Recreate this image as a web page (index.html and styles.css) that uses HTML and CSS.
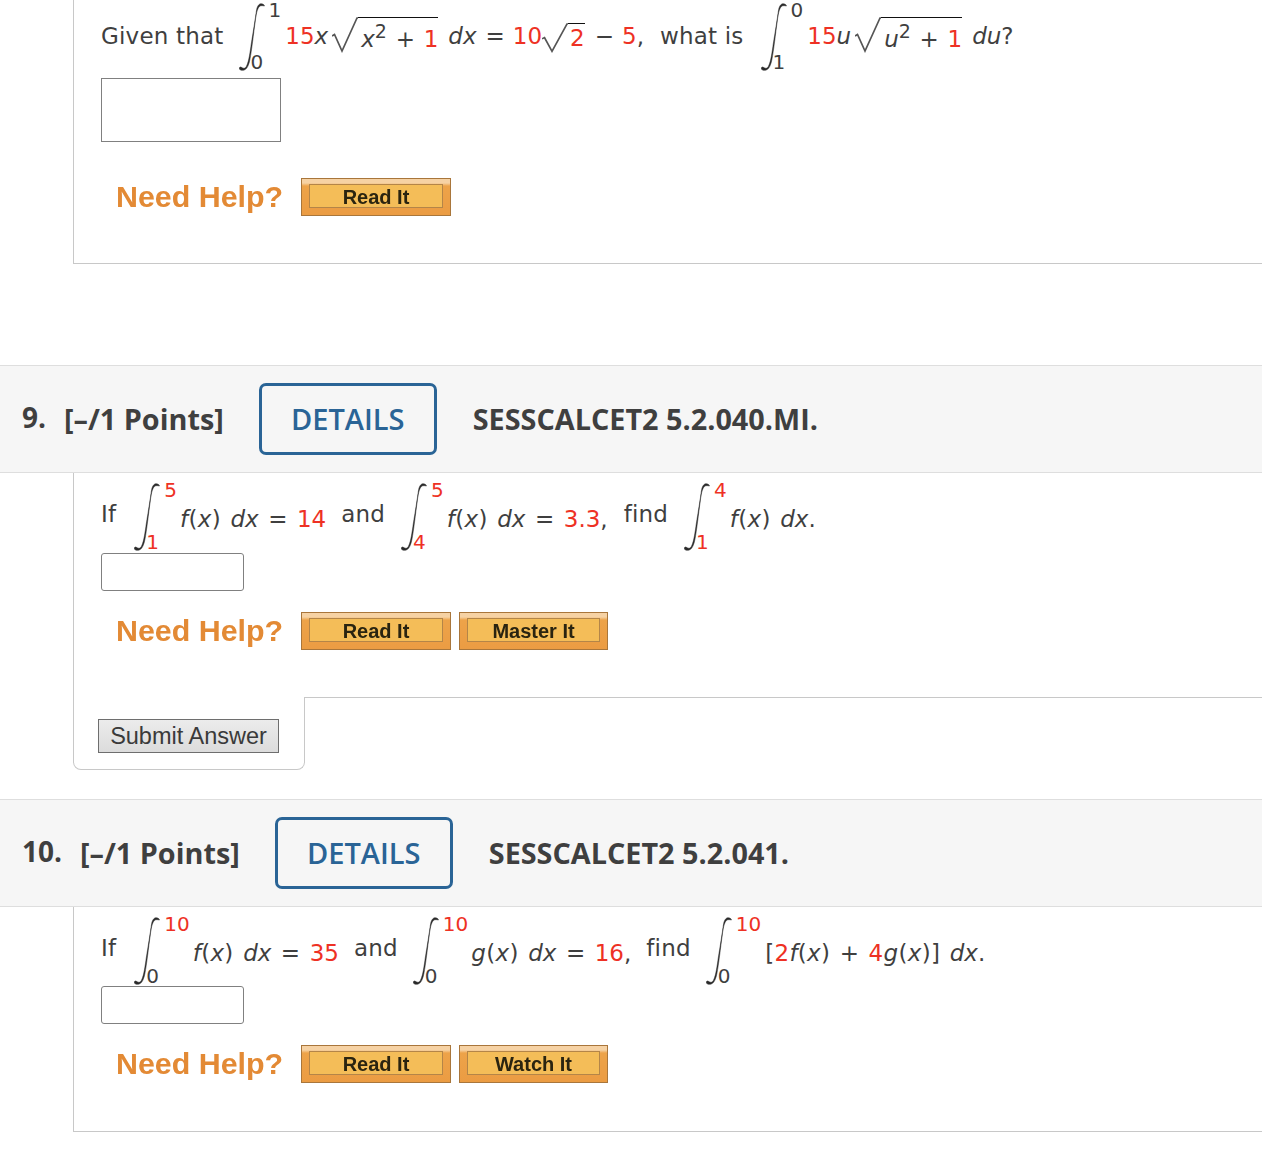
FILE: index.html
```html
<!DOCTYPE html>
<html lang="en">
<head>
<meta charset="utf-8">
<title>SESSCALCET2 questions</title>
<link rel="stylesheet" href="styles.css">
</head>
<body>
<svg class="defs" width="0" height="0" aria-hidden="true"><defs>
<symbol id="int" viewBox="0 0 27 68"><path d="M25.5 3C25 1 22.5 .2 20.8 1 19 2 18 4 17.4 8 16 18 14 30 12.4 40 11 50 9.8 58 8 62 7 64.6 6 65.4 4.6 65.2 3.4 65.2 2.8 64.4 1.8 64 .8 63.8 .2 64.8 .2 65.6 .6 67.2 2.8 67.6 4.6 67.2 8 66.5 9.9 62 11 56 12.6 48 14.6 30 16 20 17 12 18 5 21 3 22.6 2.4 24 2.8 25.5 3Z"/></symbol>
<symbol id="rad" viewBox="0 0 26 36" preserveAspectRatio="none"><path d="M0 19l2.5-1.5L10 34 25 1h1" fill="none" stroke="#555" stroke-width="1.7"/></symbol>
</defs></svg>

<section class="qbody qbody-first">
  <div class="math row-a">
    <span class="t">Given that</span>
    <span class="integral m-15"><svg class="int-svg"><use href="#int"/></svg><span class="lims"><span class="up">1</span><span class="lo">0</span></span></span>
    <span class="r m-4">15</span><i>x</i>
    <span class="sqrt sq-a m-4"><svg class="rad"><use href="#rad"/></svg><span class="under"><i>x</i><sup>2</sup> + <span class="r">1</span></span></span>
    <i class="m-10">dx</i><span class="m-9">=</span><span class="r m-8">10</span>
    <span class="sqrt sq-b"><svg class="rad"><use href="#rad"/></svg><span class="under"><span class="r">2</span></span></span>
    <span class="m-10">−</span><span class="r m-8">5</span><span>,</span>
    <span class="t m-16">what is</span>
    <span class="integral m-17"><svg class="int-svg"><use href="#int"/></svg><span class="lims"><span class="up">0</span><span class="lo">1</span></span></span>
    <span class="r m-4">15</span><i>u</i>
    <span class="sqrt sq-a m-4"><svg class="rad"><use href="#rad"/></svg><span class="under"><i>u</i><sup>2</sup> + <span class="r">1</span></span></span>
    <span class="m-10"><i>du</i>?</span>
  </div>
  <input class="answer answer-wide" type="text" aria-label="Answer">
  <div class="help help-first">
    <span class="need">Need Help?</span>
    <a class="resource"><span class="resource-in">Read It</span></a>
  </div>
</section>

<header class="qhead qhead-9">
  <span class="qnum">9.</span><span class="pts">[–/1 Points]</span>
  <a class="details">DETAILS</a>
  <span class="code">SESSCALCET2 5.2.040.MI.</span>
</header>
<section class="qbody-open">
  <div class="qmain">
    <div class="math row-b">
      <span class="t up-t">If</span>
      <span class="integral m-18"><svg class="int-svg"><use href="#int"/></svg><span class="lims"><span class="up r">5</span><span class="lo r">1</span></span></span>
      <span class="low m-3"><span class="fx"><i>f</i>(<i>x</i>)</span> <i>dx</i> = <span class="r">14</span></span>
      <span class="t up-t m-15">and</span>
      <span class="integral m-16"><svg class="int-svg"><use href="#int"/></svg><span class="lims"><span class="up r">5</span><span class="lo r">4</span></span></span>
      <span class="low m-3"><span class="fx"><i>f</i>(<i>x</i>)</span> <i>dx</i> = <span class="r">3.3</span>,</span>
      <span class="t up-t m-16">find</span>
      <span class="integral m-16"><svg class="int-svg"><use href="#int"/></svg><span class="lims"><span class="up r">4</span><span class="lo r">1</span></span></span>
      <span class="low m-3"><span class="fx"><i>f</i>(<i>x</i>)</span> <i>dx</i>.</span>
    </div>
    <input class="answer answer-small" type="text" aria-label="Answer">
    <div class="help help-second">
      <span class="need">Need Help?</span>
      <a class="resource"><span class="resource-in">Read It</span></a>
      <a class="resource resource-alt"><span class="resource-in">Master It</span></a>
    </div>
  </div>
  <div class="submit-row">
    <div class="submit-box"><button class="submit" type="button">Submit Answer</button></div>
    <div class="submit-rule"></div>
  </div>
</section>

<header class="qhead qhead-10">
  <span class="qnum">10.</span><span class="pts">[–/1 Points]</span>
  <a class="details">DETAILS</a>
  <span class="code">SESSCALCET2 5.2.041.</span>
</header>
<section class="qbody qbody-last">
  <div class="math row-b">
    <span class="t up-t">If</span>
    <span class="integral m-18"><svg class="int-svg"><use href="#int"/></svg><span class="lims"><span class="up r">10</span><span class="lo">0</span></span></span>
    <span class="low m-3"><span class="fx"><i>f</i>(<i>x</i>)</span> <i>dx</i> = <span class="r">35</span></span>
    <span class="t up-t m-15">and</span>
    <span class="integral m-15"><svg class="int-svg"><use href="#int"/></svg><span class="lims"><span class="up r">10</span><span class="lo">0</span></span></span>
    <span class="low m-3"><span class="fx"><i>g</i>(<i>x</i>)</span> <i>dx</i> = <span class="r">16</span>,</span>
    <span class="t up-t m-15">find</span>
    <span class="integral m-15"><svg class="int-svg"><use href="#int"/></svg><span class="lims"><span class="up r">10</span><span class="lo">0</span></span></span>
    <span class="low m-4"><span class="fx">[<span class="r">2</span><i>f</i>(<i>x</i>)</span> + <span class="fx"><span class="r">4</span><i>g</i>(<i>x</i>)]</span> <i>dx</i>.</span>
  </div>
  <input class="answer answer-small answer-last" type="text" aria-label="Answer">
  <div class="help help-second">
    <span class="need">Need Help?</span>
    <a class="resource"><span class="resource-in">Read It</span></a>
    <a class="resource resource-alt"><span class="resource-in">Watch It</span></a>
  </div>
</section>
</body>
</html>
```

FILE: styles.css
```css
* { box-sizing: border-box; }
html, body { margin: 0; padding: 0; }
body { background: #fff; color: #3f3f3f; font-family: "DejaVu Sans", sans-serif; font-size: 23px; height: 1150px; overflow: hidden; }
.defs { position: absolute; }

.qbody { margin-left: 73px; border-left: 1px solid #c8c8c8; border-bottom: 1px solid #c8c8c8; padding-left: 27px; }
.qbody-first { height: 264px; padding-top: 3px; margin-bottom: 101px; }
.qbody-last { height: 225px; padding-top: 10px; }
.qbody-open { margin-left: 73px; margin-bottom: 29px; }
.qmain { height: 224px; border-left: 1px solid #c8c8c8; padding: 10px 0 0 27px; }

.qhead { display: flex; align-items: center; height: 108px; background: #f6f6f6; border-top: 1px solid #dedede; border-bottom: 1px solid #dedede; padding-left: 22px; font-family: "Open Sans", sans-serif; font-weight: 700; font-size: 28.8px; color: #3f3f3f; }
.qnum { margin-top: -4px; margin-right: 18px; font-size: 28px; }
.pts { margin-right: 35px; padding-bottom: 2px; }
.code { padding-bottom: 2px; }
.details { display: flex; align-items: center; justify-content: center; width: 178px; height: 72px; padding-bottom: 2px; border: 3px solid #2a6496; border-radius: 7px; color: #2a6496; font-weight: 600; font-size: 29px; margin-right: 36px; }

.math { display: flex; align-items: center; height: 68px; white-space: pre; word-spacing: 2.2px; }
.row-a { margin-top: -1px; }
.math i { font-style: italic; }
.fx { letter-spacing: .3px; }
.r { color: #ee3124; }
.t { letter-spacing: .2px; word-spacing: 0; }
.up-t { margin-top: -6px; }
.low { margin-top: 3px; }
.m-3 { margin-left: 3px; }
.m-4 { margin-left: 4px; }
.m-8 { margin-left: 8px; }
.m-9 { margin-left: 9px; }
.m-10 { margin-left: 10px; }
.m-15 { margin-left: 15px; }
.m-16 { margin-left: 16px; }
.m-17 { margin-left: 17px; }
.m-18 { margin-left: 18px; }

.integral { display: flex; height: 68px; }
.row-a .integral { margin-top: 2px; }
.int-svg { width: 27px; height: 68px; fill: #2a2a2a; stroke: #2a2a2a; stroke-width: .5px; flex: none; }
.lims { display: flex; flex-direction: column; justify-content: space-between; margin: -3px 0 -1px -15px; font-size: 20px; line-height: 20px; }
.up { padding-left: 18px; }

.sqrt { display: inline-flex; align-items: stretch; }
.sq-a { height: 36px; margin-top: -2px; }
.sq-b { height: 30px; margin-top: 4px; }
.rad { width: 26px; height: 100%; flex: none; }
.under { border-top: 1px solid #111; padding-left: 3px; line-height: 42px; word-spacing: 1.4px; }
.sq-b .under { padding-left: 2px; line-height: 28px; }
.under sup { font-size: 19px; line-height: 0; vertical-align: 9px; }

.answer { display: block; border: 1px solid #808080; background: #fff; padding: 0; margin: 0; }
.answer-wide { width: 180px; height: 64px; margin-top: 8px; }
.answer-small { width: 143px; height: 38px; border-radius: 3px; margin-top: 2px; }
.answer-last { margin-top: 1px; }

.help { display: flex; align-items: center; height: 38px; padding-left: 15px; }
.help-first { margin-top: 36px; }
.help-second { margin-top: 21px; }
.need { font-family: "Liberation Sans", sans-serif; font-weight: 700; font-size: 30.4px; color: #e38a35; width: 185px; padding-bottom: 2px; filter: blur(.5px); white-space: nowrap; }
.resource { display: flex; width: 150px; height: 38px; padding: 5px 7px 7px; background: linear-gradient(#f6d2a4 0, #f6d2a4 4px, #eda349 7px, #eb9c43 100%); border: 1px solid #a9763b; font-family: "Liberation Sans", sans-serif; font-weight: 700; font-size: 20px; color: #2a2410; filter: blur(.35px); }
.resource-in { flex: 1; display: flex; align-items: center; justify-content: center; padding-top: 3px; background: #f4bd58; border: 1px solid #b48548; }
.resource-alt { width: 149px; margin-left: 8px; }

.submit-row { display: flex; height: 73px; }
.submit-box { width: 232px; border: 1px solid #c8c8c8; border-top: 0; border-radius: 0 0 8px 8px; padding: 22px 0 0 24px; }
.submit-rule { flex: 1; border-top: 1px solid #c8c8c8; margin-left: -1px; }
.submit { display: block; width: 181px; height: 34px; padding: 0; border: 1px solid #6e6e6e; background: linear-gradient(#ececec, #dcdcdc); font-family: "Liberation Sans", sans-serif; font-size: 23.5px; color: #3a3a3a; }
```
